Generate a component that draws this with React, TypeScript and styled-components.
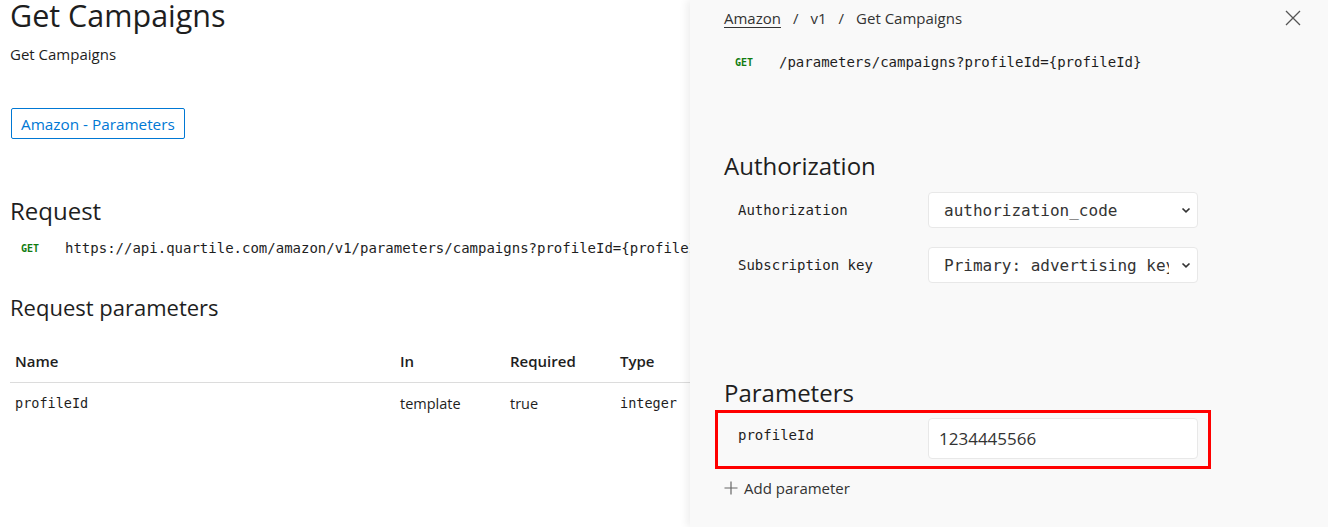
import React from "react";
import styled, { createGlobalStyle } from "styled-components";

const GlobalStyle = createGlobalStyle`
  html, body {
    margin: 0;
    padding: 0;
    background: #fff;
    overflow: hidden;
  }
  body {
    font-family: "Open Sans", "Noto Sans", sans-serif;
    color: #333;
  }
`;

const mono = `"DejaVu Sans Mono", "Liberation Mono", monospace`;

const Page = styled.div`
  display: grid;
  grid-template-columns: 690px 1fr;
  width: 1328px;
  height: 527px;
  overflow: hidden;
`;

const Main = styled.main`
  padding: 0 10px;
  overflow: hidden;
  white-space: nowrap;
`;

const Title = styled.h1`
  margin: 0;
  font-size: 30.5px;
  font-weight: 400;
  line-height: 30px;
  color: #1e1e1e;
`;

const Subtitle = styled.p`
  margin: 14px 0 0;
  font-size: 15px;
  line-height: 20px;
  color: #1e1e1e;
`;

const TagButton = styled.button`
  display: inline-flex;
  align-items: center;
  margin-top: 44px;
  margin-left: 1px;
  height: 31px;
  padding: 0 9px;
  background: #fff;
  border: 1px solid #0078d4;
  border-radius: 2px;
  color: #0078d4;
  font-family: inherit;
  font-size: 15.3px;
`;

const SectionTitle = styled.h2<{ size?: number; gap: number }>`
  margin: ${({ gap }) => gap}px 0 0;
  font-size: ${({ size }) => size ?? 24}px;
  font-weight: 400;
  line-height: 30px;
  color: #1e1e1e;
`;

const Endpoint = styled.div<{ gap: number }>`
  display: flex;
  align-items: center;
  margin-top: ${({ gap }) => gap}px;
  padding-left: 11px;
  height: 20px;
`;

const Method = styled.span`
  width: 44px;
  flex-shrink: 0;
  color: #107c10;
  font-family: ${mono};
  font-size: 10px;
  font-weight: 700;
`;

const Url = styled.span`
  font-family: ${mono};
  font-size: 14px;
  color: #1e1e1e;
`;

const Table = styled.div`
  margin-top: 18px;
  width: 720px;
`;

const TableRow = styled.div<{ head?: boolean }>`
  display: grid;
  grid-template-columns: 385px 110px 110px 1fr;
  align-items: center;
  height: ${({ head }) => (head ? 42 : 40)}px;
  border-bottom: ${({ head }) => (head ? "1px solid #dcdcdc" : "none")};
  font-weight: ${({ head }) => (head ? 600 : 400)};
  font-size: ${({ head }) => (head ? 15 : 14.5)}px;
  color: #1e1e1e;
`;

const Cell = styled.span<{ code?: boolean }>`
  padding-left: 5px;
  font-family: ${({ code }) => (code ? mono : "inherit")};
  font-size: ${({ code }) => (code ? "13.5px" : "inherit")};
`;

const Panel = styled.aside`
  background: #f9f9f9;
  box-shadow: -3px 0 8px rgba(0, 0, 0, 0.07);
  padding: 8px 0 0 34px;
  position: relative;
  z-index: 1;
`;

const PanelHeader = styled.div`
  display: flex;
  align-items: center;
  justify-content: space-between;
  height: 20px;
  padding-right: 27px;
`;

const Crumbs = styled.nav`
  display: flex;
  align-items: center;
  gap: 12px;
  font-size: 15px;
  color: #333;
`;

const CrumbLink = styled.a`
  color: #333;
  text-decoration: underline;
  text-underline-offset: 3px;
`;

const CloseButton = styled.button`
  display: flex;
  padding: 0;
  border: none;
  background: none;
  color: #555;
`;

const PanelHeading = styled.h3<{ gap: number }>`
  margin: ${({ gap }) => gap}px 0 0;
  font-size: 24px;
  font-weight: 400;
  line-height: 32px;
  color: #1e1e1e;
`;

const FieldRow = styled.div<{ gap: number; inset?: number }>`
  display: grid;
  grid-template-columns: 190px 270px;
  align-items: center;
  margin-top: ${({ gap }) => gap}px;
  padding-left: ${({ inset }) => inset ?? 14}px;
`;

const FieldLabel = styled.label<{ top?: boolean }>`
  font-family: ${mono};
  font-size: 14px;
  color: #1e1e1e;
  align-self: ${({ top }) => (top ? "start" : "center")};
  margin-top: ${({ top }) => (top ? "9px" : "0")};
`;

const SelectBox = styled.div`
  display: flex;
  align-items: center;
  height: 36px;
  box-sizing: border-box;
  padding: 0 6px 0 15px;
  background: #fff;
  border: 1px solid #e8e8e8;
  border-radius: 4px;
  font-family: ${mono};
  font-size: 16px;
  color: #333;
`;

const SelectText = styled.span`
  flex: 1;
  margin-right: 12px;
  overflow: hidden;
  white-space: nowrap;
`;

const Highlight = styled.div`
  margin: 1px 0 0 -9px;
  width: 496px;
  box-sizing: border-box;
  border: 3px solid #ff0000;
  padding: 5px 10px 7px 0;
`;

const TextInput = styled.div`
  height: 41px;
  box-sizing: border-box;
  display: flex;
  align-items: center;
  padding-left: 10px;
  background: #fff;
  border: 1px solid #e8e8e8;
  border-radius: 4px;
  font-size: 17px;
  color: #333;
`;

const AddParam = styled.div`
  display: flex;
  align-items: center;
  gap: 6px;
  margin-top: 9px;
  height: 20px;
  font-size: 15px;
  color: #333;
`;

const Chevron = () => (
  <svg width="10" height="10" viewBox="0 0 10 10">
    <path d="M1.5 3.5 L5 6.8 L8.5 3.5" fill="none" stroke="#333" strokeWidth="1.7" />
  </svg>
);

export default function App() {
  return (
    <>
      <GlobalStyle />
      <Page>
        <Main>
          <Title>Get Campaigns</Title>
          <Subtitle>Get Campaigns</Subtitle>
          <TagButton>Amazon - Parameters</TagButton>
          <SectionTitle gap={57}>Request</SectionTitle>
          <Endpoint gap={12}>
            <Method>GET</Method>
            <Url>https://api.quartile.com/amazon/v1/parameters/campaigns?profileId=&#123;profileId&#125;</Url>
          </Endpoint>
          <SectionTitle gap={34} size={22}>Request parameters</SectionTitle>
          <Table>
            <TableRow head>
              <Cell>Name</Cell>
              <Cell>In</Cell>
              <Cell>Required</Cell>
              <Cell>Type</Cell>
            </TableRow>
            <TableRow>
              <Cell code>profileId</Cell>
              <Cell>template</Cell>
              <Cell>true</Cell>
              <Cell code>integer</Cell>
            </TableRow>
          </Table>
        </Main>

        <Panel>
          <PanelHeader>
            <Crumbs>
              <CrumbLink>Amazon</CrumbLink>
              <span>/</span>
              <span>v1</span>
              <span>/</span>
              <span>Get Campaigns</span>
            </Crumbs>
            <CloseButton aria-label="Close">
              <svg width="16" height="16" viewBox="0 0 16 16">
                <path d="M1 1 L15 15 M15 1 L1 15" stroke="#555" strokeWidth="1.3" />
              </svg>
            </CloseButton>
          </PanelHeader>
          <Endpoint gap={24}>
            <Method>GET</Method>
            <Url>/parameters/campaigns?profileId=&#123;profileId&#125;</Url>
          </Endpoint>

          <PanelHeading gap={78}>Authorization</PanelHeading>
          <FieldRow gap={10}>
            <FieldLabel>Authorization</FieldLabel>
            <SelectBox>
              <SelectText>authorization_code</SelectText>
              <Chevron />
            </SelectBox>
          </FieldRow>
          <FieldRow gap={19}>
            <FieldLabel>Subscription key</FieldLabel>
            <SelectBox>
              <SelectText>Primary: advertising key</SelectText>
              <Chevron />
            </SelectBox>
          </FieldRow>

          <PanelHeading gap={94}>Parameters</PanelHeading>
          <Highlight>
            <FieldRow gap={0} inset={20}>
              <FieldLabel top>profileId</FieldLabel>
              <TextInput>1234445566</TextInput>
            </FieldRow>
          </Highlight>
          <AddParam>
            <svg width="14" height="14" viewBox="0 0 14 14">
              <path d="M7 0.5 V13.5 M0.5 7 H13.5" stroke="#666" strokeWidth="1.2" />
            </svg>
            Add parameter
          </AddParam>
        </Panel>
      </Page>
    </>
  );
}
